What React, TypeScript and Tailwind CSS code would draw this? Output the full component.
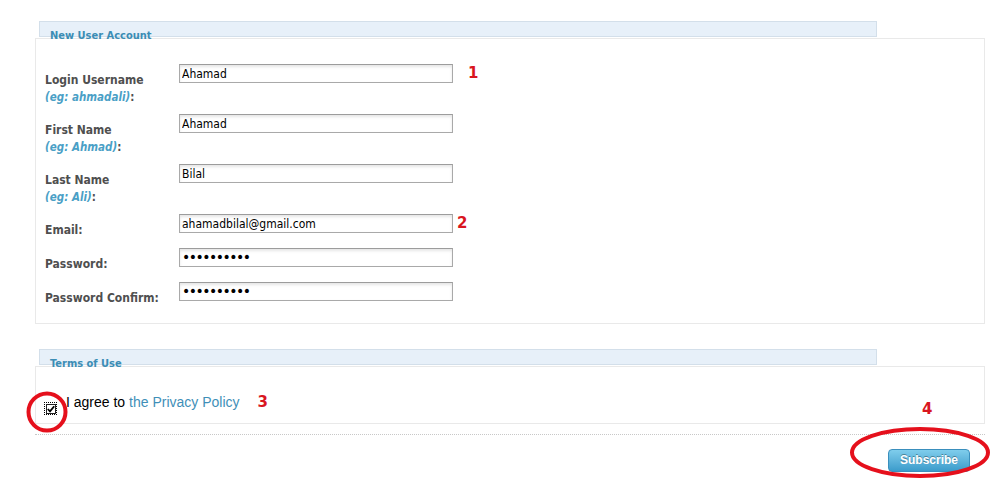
import React from 'react';

const labelFont = "font-['Tahoma','DejaVu_Sans_Condensed','DejaVu_Sans',sans-serif]";

type Field = {
  label: string;
  hint?: string;
  value: string;
  type?: 'text' | 'password';
  mark?: string;
  markGap?: string;
};

const fields: Field[] = [
  { label: 'Login Username', hint: 'eg: ahmadali', value: 'Ahamad', mark: '1', markGap: 'ml-[15px]' },
  { label: 'First Name', hint: 'eg: Ahmad', value: 'Ahamad' },
  { label: 'Last Name', hint: 'eg: Ali', value: 'Bilal' },
  { label: 'Email:', value: 'ahamadbilal@gmail.com', mark: '2', markGap: 'ml-[4px]' },
  { label: 'Password:', value: 'abcdefghij', type: 'password' },
  { label: 'Password Confirm:', value: 'abcdefghij', type: 'password' },
];

function Mark({ n, className = '' }: { n: string; className?: string }) {
  return (
    <span className={`text-[15px] font-bold leading-none text-[#d9161f] font-['DejaVu_Sans',sans-serif] ${className}`}>
      {n}
    </span>
  );
}

function SectionTitle({ title }: { title: string }) {
  return (
    <div className="relative z-10 ml-[4px] h-[16px] w-[838px] border border-[#d3dfea] bg-[#e7f0f9]">
      <div className={`pl-[10px] pt-[8px] text-[11px] font-bold leading-[12px] text-[#3b8db5] ${labelFont}`}>
        {title}
      </div>
    </div>
  );
}

function FormRow({ f }: { f: Field }) {
  const tall = !!f.hint;
  return (
    <div className={`flex items-start ${tall ? 'h-[50px]' : 'h-[34px]'}`}>
      <div className={`w-[134px] pt-[8px] text-[12px] font-bold leading-[17px] text-[#4f4f4f] ${labelFont}`}>
        <div>{f.label}</div>
        {f.hint && (
          <div className="text-[11.5px]">
            <span className="italic text-[#4a9fc6]">({f.hint})</span>:
          </div>
        )}
      </div>
      <div className="flex items-center">
        <input
          readOnly
          type={f.type ?? 'text'}
          defaultValue={f.value}
          className={`h-[19px] w-[274px] border border-[#a9a9a9] border-t-[#9c9c9c] bg-white px-[2px] text-black shadow-[inset_0_2px_3px_rgba(0,0,0,0.10)] outline-none ${
            f.type === 'password'
              ? "text-[14px] tracking-[-1.5px] font-['DejaVu_Sans',sans-serif]"
              : `text-[12px] ${labelFont}`
          }`}
        />
        {f.mark && <Mark n={f.mark} className={f.markGap} />}
      </div>
    </div>
  );
}

export default function App() {
  return (
    <div className="min-h-[488px] w-[1008px] bg-white">
      <div className="ml-[35px] w-[950px] pt-[21px]">
        {/* New User Account */}
        <SectionTitle title="New User Account" />
        <div className="relative mt-[1px] border border-[#e9e9e9] pb-[7px] pl-[9px] pt-[25px]">
          {fields.map((f) => (
            <FormRow key={f.label} f={f} />
          ))}
        </div>

        {/* Terms of Use */}
        <div className="mt-[25px]">
          <SectionTitle title="Terms of Use" />
        </div>
        <div className="relative mt-[1px] border border-[#e9e9e9] pb-[8px] pl-[8px] pt-[27px]">
          <div className="flex items-start">
            <span className="relative mt-[8px] flex h-[13px] w-[13px] items-center justify-center border border-dotted border-black bg-white">
              <span className="flex h-[10px] w-[10px] items-center justify-center border border-[#222] bg-white">
                <svg width="8" height="8" viewBox="0 0 8 8">
                  <path d="M0.8 4 L3 6.3 L7.2 1.2" fill="none" stroke="#000" strokeWidth="1.8" />
                </svg>
              </span>
              <svg
                className="pointer-events-none absolute left-[-20px] top-[-13px]"
                width="44"
                height="44"
                viewBox="0 0 44 44"
              >
                <circle cx="22" cy="22" r="18.5" fill="none" stroke="#e5101c" strokeWidth="4" />
              </svg>
            </span>
            <p className="ml-[9px] text-[14px] leading-[16px] text-black font-['Liberation_Sans',Arial,sans-serif]">
              I agree to <a className="text-[#3f8fb8]">the Privacy Policy</a>
            </p>
            <Mark n="3" className="ml-[18px] mt-[1px]" />
          </div>
          <Mark n="4" className="absolute left-[886px] top-[35px]" />
        </div>
        <div className="mt-[10px] border-t border-dotted border-[#c8c8c8]" />

        <div className="mt-[11px] flex justify-end pr-[15px]">
          <div className="relative">
            <button className="h-[23px] w-[82px] rounded-[4px] border border-[#3a8fbd] bg-gradient-to-b from-[#7fcdec] to-[#3b9ccb] text-[12px] font-bold text-white [text-shadow:0_-1px_0_rgba(0,0,0,0.35)] font-['Liberation_Sans',Arial,sans-serif]">
              Subscribe
            </button>
            <svg
              className="pointer-events-none absolute left-[-39px] top-[-20px]"
              width="142"
              height="53"
              viewBox="0 0 142 53"
            >
              <ellipse cx="71" cy="26.5" rx="68" ry="23.5" fill="none" stroke="#e5101c" strokeWidth="4" />
            </svg>
          </div>
        </div>
      </div>
    </div>
  );
}
